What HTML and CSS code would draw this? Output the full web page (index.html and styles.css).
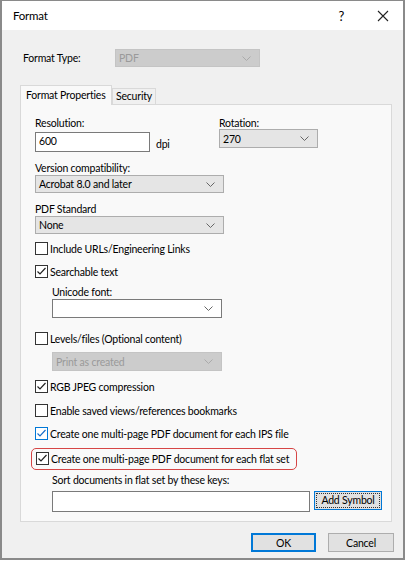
FILE: index.html
```html
<!DOCTYPE html>
<html lang="en">
<head>
    <meta charset="UTF-8">
    <title>Format</title>
    <link rel="stylesheet" href="styles.css">
</head>
<body>
    <div class="window">
        <div class="titlebar">
            <span class="title">Format</span>
            <span class="help">?</span>
            <svg class="close" width="12" height="12" viewBox="0 0 12 12"><path d="M1 1 L11 11 M11 1 L1 11" stroke="#222" stroke-width="1.1"/></svg>
        </div>

        <div class="content">
            <div class="type-row">
                <label class="type-label">Format Type:</label>
                <div class="select disabled type-select">
                    <span>PDF</span>
                    <svg class="chev" width="9" height="5" viewBox="0 0 9 5"><polyline points="0.5,0.5 4.5,4.5 8.5,0.5" fill="none" stroke="#aaa"/></svg>
                </div>
            </div>

            <div class="tabs">
                <div class="tab active">Format Properties</div>
                <div class="tab">Security</div>
            </div>

            <div class="panel">
                <div class="top-grid">
                    <div class="field">
                        <label>Resolution:</label>
                        <div class="res-row">
                            <div class="input res-input">600</div>
                            <span class="unit">dpi</span>
                        </div>
                    </div>
                    <div class="field rotation">
                        <label>Rotation:</label>
                        <div class="select rot-select">
                            <span>270</span>
                            <svg class="chev" width="9" height="5" viewBox="0 0 9 5"><polyline points="0.5,0.5 4.5,4.5 8.5,0.5" fill="none" stroke="#666"/></svg>
                        </div>
                    </div>
                </div>

                <label class="lbl version-lbl">Version compatibility:</label>
                <div class="select wide">
                    <span>Acrobat 8.0 and later</span>
                    <svg class="chev" width="9" height="5" viewBox="0 0 9 5"><polyline points="0.5,0.5 4.5,4.5 8.5,0.5" fill="none" stroke="#666"/></svg>
                </div>

                <label class="lbl std-lbl">PDF Standard</label>
                <div class="select wide">
                    <span>None</span>
                    <svg class="chev" width="9" height="5" viewBox="0 0 9 5"><polyline points="0.5,0.5 4.5,4.5 8.5,0.5" fill="none" stroke="#666"/></svg>
                </div>

                <div class="check urls"><span class="box"></span>Include URLs/Engineering Links</div>
                <div class="check searchable"><span class="box"><svg width="11" height="11" viewBox="0 0 11 11"><polyline points="1.5,5.5 4,8 9.5,2" fill="none" stroke="#222" stroke-width="1.2"/></svg></span>Searchable text</div>

                <div class="sub">
                    <label class="lbl unicode-lbl">Unicode font:</label>
                    <div class="select white sub-select">
                        <span></span>
                        <svg class="chev" width="9" height="5" viewBox="0 0 9 5"><polyline points="0.5,0.5 4.5,4.5 8.5,0.5" fill="none" stroke="#666"/></svg>
                    </div>
                </div>

                <div class="check levels"><span class="box"></span>Levels/files (Optional content)</div>

                <div class="sub">
                    <div class="select disabled sub-select print-select">
                        <span>Print as created</span>
                        <svg class="chev" width="9" height="5" viewBox="0 0 9 5"><polyline points="0.5,0.5 4.5,4.5 8.5,0.5" fill="none" stroke="#aaa"/></svg>
                    </div>
                </div>

                <div class="check rgb"><span class="box"><svg width="11" height="11" viewBox="0 0 11 11"><polyline points="1.5,5.5 4,8 9.5,2" fill="none" stroke="#222" stroke-width="1.2"/></svg></span>RGB JPEG compression</div>
                <div class="check views"><span class="box"></span>Enable saved views/references bookmarks</div>
                <div class="check ips"><span class="box focus"><svg width="11" height="11" viewBox="0 0 11 11"><polyline points="1.5,5.5 4,8 9.5,2" fill="none" stroke="#1a6fc9" stroke-width="1.2"/></svg></span>Create one multi-page PDF document for each IPS file</div>

                <div class="highlight">
                    <div class="check"><span class="box"><svg width="11" height="11" viewBox="0 0 11 11"><polyline points="1.5,5.5 4,8 9.5,2" fill="none" stroke="#222" stroke-width="1.2"/></svg></span>Create one multi-page PDF document for each flat set</div>
                </div>

                <div class="sub">
                    <label class="lbl sort-lbl">Sort documents in flat set by these keys:</label>
                    <div class="sort-row">
                        <div class="input sort-input"></div>
                        <button class="btn add-btn"><span>Add Symbol</span></button>
                    </div>
                </div>
            </div>

            <div class="actions">
                <button class="btn ok">OK</button>
                <button class="btn">Cancel</button>
            </div>
        </div>
    </div>
</body>
</html>
```

FILE: styles.css
```css
* { margin: 0; padding: 0; box-sizing: border-box; }
body {
    font-family: Lato, "Noto Sans", sans-serif;
    font-size: 10.5px;
    letter-spacing: -0.2px;
    color: #000;
    background: #fff;
    white-space: nowrap;
}
.window {
    width: 405px;
    height: 560px;
    border: 2px solid #8a8a8a;
    border-top-width: 1px;
    background: #f0f0f0;
}
.titlebar {
    height: 29px;
    background: #fff;
    display: flex;
    align-items: center;
    padding: 0 0 0 11px;
    font-size: 11.5px;
}
.title { flex: 1; }
.help { margin-right: 33px; font-size: 13px; }
.close { margin-right: 14px; }

.content { padding: 0 0 0 18px; }

.type-row {
    display: flex;
    align-items: center;
    margin-top: 18px;
    height: 20px;
}
.type-label { width: 95px; padding-left: 3px; }
.type-select { width: 145px; height: 20px; }

.select {
    display: flex;
    align-items: center;
    justify-content: space-between;
    background: #e5e5e5;
    border: 1px solid #adadad;
    padding: 0 8px 0 3px;
    height: 18px;
}
.select.disabled { background: #cccccc; border-color: #c4c4c4; color: #9a9a9a; }
.select.white { background: #fff; border-color: #7a7a7a; }
.chev { flex-shrink: 0; }

.input {
    background: #fff;
    border: 1px solid #7a7a7a;
    height: 20px;
    padding: 2px 3px;
}

.tabs {
    display: flex;
    align-items: flex-end;
    margin-top: 17px;
    height: 19px;
    position: relative;
    z-index: 1;
}
.tab {
    border: 1px solid #d9d9d9;
    border-bottom: none;
    background: #f0f0f0;
    height: 16px;
    padding: 0 3px;
    line-height: 15px;
}
.tab.active {
    background: #f9f9f9;
    width: 92px;
    height: 20px;
    margin-bottom: -1px;
    padding: 0 5px;
    line-height: 18px;
}

.panel {
    width: 372px;
    height: 418px;
    border: 1px solid #d9d9d9;
    background: #f9f9f9;
    padding: 11px 0 0 14px;
}
.top-grid {
    display: grid;
    grid-template-columns: 184px 100px;
}
label { display: block; }
.field label { line-height: 14px; height: 16px; }
.res-row { display: flex; align-items: center; }
.res-input { width: 115px; }
.unit { margin-left: 6px; padding-top: 3px; }
.rotation label { height: 13px; }
.rot-select { width: 99px; height: 19px; }

.lbl { line-height: 14px; height: 14px; }
.version-lbl { margin-top: 9px; }
.std-lbl { margin-top: 9px; }
.wide { width: 189px; }

.check {
    display: flex;
    align-items: center;
    height: 13px;
}
.box {
    width: 13px;
    height: 13px;
    border: 1px solid #333;
    background: #fff;
    margin-right: 2px;
    flex-shrink: 0;
    display: flex;
    align-items: center;
    justify-content: center;
}
.box.focus { border-color: #0078d7; }

.check.urls { margin-top: 8px; }
.check.searchable { margin-top: 10px; }
.sub { padding-left: 17px; }
.unicode-lbl { margin-top: 7px; }
.sub-select { width: 170px; height: 19px; }
.check.levels { margin-top: 14px; }
.print-select { margin-top: 7px; }
.check.rgb { margin-top: 9px; }
.check.views { margin-top: 11px; }
.check.ips { margin-top: 10px; }

.highlight {
    margin-top: 8px;
    margin-left: -4px;
    width: 266px;
    height: 22px;
    border: 1.5px solid #d64545;
    border-radius: 5px;
    padding: 3px 0 0 4px;
}

.sort-lbl { margin-top: 3px; height: 18px; }
.sort-row { display: flex; align-items: flex-start; gap: 4px; }
.sort-input { width: 258px; height: 21px; }

.btn {
    font-family: inherit;
    font-size: 10.5px;
    letter-spacing: -0.2px;
    background: #e1e1e1;
    border: 1px solid #adadad;
    color: #000;
    height: 19px;
    width: 66px;
}
.add-btn {
    width: 68px;
    height: 19px;
    border: 1px solid #0078d7;
    padding: 1px;
}
.add-btn span {
    display: block;
    border: 1px dotted #333;
    height: 15px;
    line-height: 13px;
}

.actions {
    display: flex;
    justify-content: flex-end;
    gap: 12px;
    margin-top: 11px;
    padding-right: 9px;
}
.btn.ok { border: 2px solid #0078d7; width: 65px; }
```
